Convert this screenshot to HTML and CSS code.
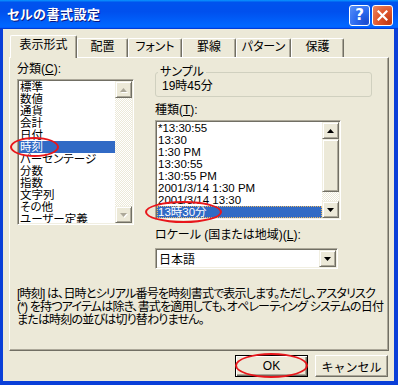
FILE: index.html
```html
<!DOCTYPE html>
<html lang="ja">
<head>
    <meta charset="UTF-8">
    <title>セルの書式設定</title>
    <link rel="stylesheet" href="styles.css">
</head>
<body>
<div class="window">
    <div class="titlebar">
        <span class="title">セルの書式設定</span>
        <div class="title-btns">
            <span class="tbtn help">?</span>
            <span class="tbtn close">
                <svg width="11" height="11" viewBox="0 0 11 11"><path d="M1.5 1.5 L9.5 9.5 M9.5 1.5 L1.5 9.5" stroke="#fff" stroke-width="2.2" stroke-linecap="square"/></svg>
            </span>
        </div>
    </div>

    <div class="client">
        <div class="tabs">
            <div class="tab active" style="width:67px">表示形式</div>
            <div class="tab" style="width:51px">配置</div>
            <div class="tab" style="width:54px">フォント</div>
            <div class="tab" style="width:54px">罫線</div>
            <div class="tab" style="width:55px">パターン</div>
            <div class="tab" style="width:53px">保護</div>
        </div>

        <div class="panel">
            <div class="cols">
                <div class="col-left">
                    <div class="label">分類(<u>C</u>):</div>
                    <div class="listbox cat">
                        <div class="items">
                            <div class="item">標準</div>
                            <div class="item">数値</div>
                            <div class="item">通貨</div>
                            <div class="item">会計</div>
                            <div class="item">日付</div>
                            <div class="item sel">時刻</div>
                            <div class="item">パーセンテージ</div>
                            <div class="item">分数</div>
                            <div class="item">指数</div>
                            <div class="item">文字列</div>
                            <div class="item">その他</div>
                            <div class="item">ユーザー定義</div>
                        </div>
                        <div class="vscroll">
                            <div class="sbtn off">
                                <svg width="7" height="4" viewBox="0 0 7 4"><polygon points="0,4 7,4 3.5,0" fill="#ACA899"/></svg>
                            </div>
                            <div class="track"></div>
                            <div class="sbtn off">
                                <svg width="7" height="4" viewBox="0 0 7 4"><polygon points="0,0 7,0 3.5,4" fill="#ACA899"/></svg>
                            </div>
                        </div>
                    </div>
                </div>

                <div class="col-right">
                    <fieldset class="sample">
                        <legend>サンプル</legend>
                        19時45分
                    </fieldset>
                    <div class="label lbl-type">種類(<u>T</u>):</div>
                    <div class="listbox types">
                        <div class="items">
                            <div class="item">*13:30:55</div>
                            <div class="item">13:30</div>
                            <div class="item">1:30 PM</div>
                            <div class="item">13:30:55</div>
                            <div class="item">1:30:55 PM</div>
                            <div class="item">2001/3/14 1:30 PM</div>
                            <div class="item">2001/3/14 13:30</div>
                            <div class="item sel focus">13時30分</div>
                        </div>
                        <div class="vscroll">
                            <div class="sbtn">
                                <svg width="7" height="4" viewBox="0 0 7 4"><polygon points="0,4 7,4 3.5,0" fill="#000"/></svg>
                            </div>
                            <div class="thumb"></div>
                            <div class="track"></div>
                            <div class="sbtn">
                                <svg width="7" height="4" viewBox="0 0 7 4"><polygon points="0,0 7,0 3.5,4" fill="#000"/></svg>
                            </div>
                        </div>
                    </div>
                    <div class="label lbl-locale">ロケール (国または地域)(<u>L</u>):</div>
                    <div class="combo">
                        <span class="combo-text">日本語</span>
                        <div class="sbtn">
                            <svg width="7" height="4" viewBox="0 0 7 4"><polygon points="0,0 7,0 3.5,4" fill="#000"/></svg>
                        </div>
                    </div>
                </div>
            </div>

            <p class="desc">[時刻] は、日時とシリアル番号を時刻書式で表示します。ただし、アスタリスク<br>(*) を持つアイテムは除き、書式を適用しても、オペレーティング システムの日付<br>または時刻の並びは切り替わりません。</p>
        </div>

        <div class="buttons">
            <button class="btn default">OK</button>
            <button class="btn">キャンセル</button>
        </div>
    </div>

    <!-- 赤丸の注釈 -->
    <span class="mark m1"></span>
    <span class="mark m2"></span>
    <span class="mark m3"></span>
    <span class="mark m4"></span>
</div>
</body>
</html>
```

FILE: styles.css
```css
body {
    margin: 0;
    font-family: "Liberation Sans", "Noto Sans CJK JP", sans-serif;
    font-size: 12px;
    color: #000;
    font-feature-settings: "palt";
}
.window {
    position: relative;
    width: 398px;
    height: 385px;
    background: #0A3FD8;
    overflow: hidden;
}
.titlebar {
    height: 29px;
    display: flex;
    align-items: center;
    justify-content: space-between;
    padding: 0 5px 0 7px;
    background: linear-gradient(180deg, #0997ff, #0053ee 8%, #0050ee 40%, #0066ff 88%, #0066ff 93%, #005bff 95%, #003dd7 96%, #003dd7);
}
.title {
    color: white;
    font-weight: bold;
    font-size: 13px;
    line-height: 16px;
    text-shadow: 1px 1px #0A1883;
    letter-spacing: 0.5px;
}
.title-btns {
    display: flex;
    gap: 2px;
    margin-top: 1px;
}
.tbtn {
    width: 21px;
    height: 21px;
    box-sizing: border-box;
    border: 1px solid white;
    border-radius: 3px;
    display: flex;
    align-items: center;
    justify-content: center;
    color: white;
}
.help {
    background: radial-gradient(circle at 85% 85%, #1B4CD0, #2E6CF0 50%, #5A92F8);
    font-family: "DejaVu Sans", sans-serif;
    font-weight: bold;
    font-size: 15px;
}
.close {
    background: radial-gradient(circle at 85% 85%, #C13A14, #E0562C 50%, #EC8A66);
}
.client {
    margin: 0 4px 0 3px;
    height: 352px;
    box-sizing: border-box;
    background: #ECE9D8;
    padding-top: 6px;
}
.tabs {
    display: flex;
    align-items: flex-end;
    height: 22px;
    padding-left: 7px;
}
.tab {
    height: 19px;
    box-sizing: border-box;
    border: 1px solid white;
    border-right-color: #716F64;
    border-bottom: none;
    border-radius: 2px 2px 0 0;
    box-shadow: inset -1px 0 #ACA899;
    background: #ECE9D8;
    text-align: center;
    line-height: 17px;
}
.tab.active {
    position: relative;
    z-index: 1;
    height: 23px;
    margin-bottom: -1px;
    line-height: 18px;
}
.panel {
    margin-left: 6px;
    width: 380px;
    height: 294px;
    box-sizing: border-box;
    border: 1px solid white;
    border-right-color: #716F64;
    border-bottom-color: #716F64;
    box-shadow: inset -1px -1px #ACA899;
}
.cols {
    display: flex;
    gap: 21px;
    padding: 4px 0 0 7px;
}
.col-left {
    width: 117px;
}
.col-right {
    width: 217px;
}
.label {
    line-height: 14px;
    white-space: nowrap;
}
.listbox {
    display: flex;
    box-sizing: border-box;
    background: white;
    border: 1px solid;
    border-color: #ACA899 white white #ACA899;
    box-shadow: inset 1px 1px #716F64, inset -1px -1px #F1EFE2;
    padding: 1px;
    overflow: hidden;
}
.items {
    flex: 1;
    overflow: hidden;
}
.item {
    height: 12px;
    line-height: 12px;
    font-size: 11.5px;
    padding-left: 1px;
    white-space: nowrap;
    box-sizing: border-box;
}
.item.sel {
    background: #316AC5;
    color: white;
}
.item.focus {
    outline: 1px dotted #E9B867;
    outline-offset: -1px;
}
.cat {
    margin-top: 3px;
    height: 146px;
}
.types {
    margin-top: 3px;
    width: 186px;
    height: 100px;
}
.vscroll {
    width: 17px;
    display: flex;
    flex-direction: column;
}
.track {
    flex: 1;
    background-image: conic-gradient(#fff 25%, #ECE9D8 0 50%, #fff 0 75%, #ECE9D8 0);
    background-size: 2px 2px;
}
.sbtn {
    width: 17px;
    height: 17px;
    flex-shrink: 0;
    box-sizing: border-box;
    background: #ECE9D8;
    border: 1px solid;
    border-color: #F1EFE2 #716F64 #716F64 #F1EFE2;
    box-shadow: inset 1px 1px white, inset -1px -1px #ACA899;
    display: flex;
    align-items: center;
    justify-content: center;
}
.sbtn.off svg {
    filter: drop-shadow(1px 1px 0 white);
}
.thumb {
    height: 53px;
    box-sizing: border-box;
    background: #ECE9D8;
    border: 1px solid;
    border-color: #F1EFE2 #716F64 #716F64 #F1EFE2;
    box-shadow: inset 1px 1px white, inset -1px -1px #ACA899;
}
.sample {
    margin: 3px 0 0;
    padding: 0 0 2px 6px;
    height: 32px;
    box-sizing: border-box;
    border: 1px solid #D0D0BF;
    border-radius: 3px;
    line-height: 14px;
}
.sample legend {
    padding: 0 2px;
    margin-left: -4px;
    line-height: 14px;
}
.lbl-type {
    margin-top: 6px;
}
.lbl-locale {
    margin-top: 8px;
}
.combo {
    margin-top: 6px;
    width: 183px;
    height: 21px;
    box-sizing: border-box;
    display: flex;
    align-items: center;
    background: white;
    border: 1px solid;
    border-color: #ACA899 white white #ACA899;
    box-shadow: inset 1px 1px #716F64, inset -1px -1px #F1EFE2;
    padding: 1px;
}
.combo-text {
    flex: 1;
    padding-left: 2px;
}
.desc {
    margin: 19px 0 0 7px;
    line-height: 13px;
    letter-spacing: -0.8px;
    white-space: nowrap;
}
.buttons {
    display: flex;
    justify-content: flex-end;
    gap: 7px;
    margin-top: 4px;
    padding-right: 6px;
}
.btn {
    width: 73px;
    height: 22px;
    box-sizing: border-box;
    font-family: inherit;
    font-size: 12px;
    background: #ECE9D8;
    border: 1px solid;
    border-color: white #716F64 #716F64 white;
    box-shadow: inset -1px -1px #ACA899;
    padding: 0;
}
.btn.default {
    border-color: #000;
    box-shadow: inset 1px 1px white, inset -1px -1px #716F64, inset -2px -2px #ACA899;
}
.mark {
    position: absolute;
    box-sizing: border-box;
    border: 2px solid #E8161B;
    border-radius: 50%;
}
.m1 { left: 13px; top: 37px; width: 64px; height: 18px; }
.m2 { left: 10px; top: 137px; width: 49px; height: 20px; }
.m3 { left: 145px; top: 201px; width: 77px; height: 22px; }
.m4 { left: 235px; top: 353px; width: 73px; height: 25px; }
```
